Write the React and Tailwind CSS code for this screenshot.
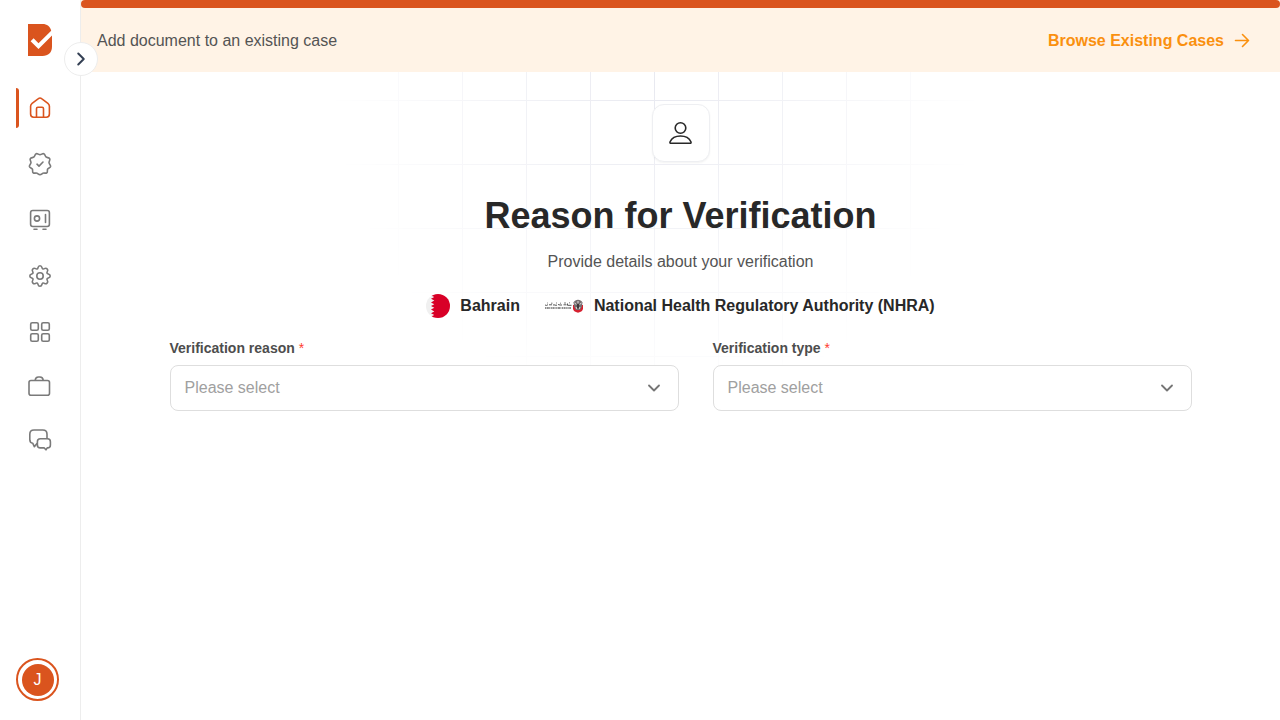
import React from "react";
import { ChevronDown, ChevronRight } from "lucide-react";

const stroke = {
  fill: "none",
  stroke: "currentColor",
  strokeWidth: 1.6,
  strokeLinecap: "round",
  strokeLinejoin: "round",
};

function Icon({ children }) {
  return (
    <svg className="size-6" viewBox="0 0 24 24" aria-hidden="true" {...stroke}>
      {children}
    </svg>
  );
}

const navItems = [
  {
    label: "Home",
    active: true,
    height: "h-10",
    icon: (
      <Icon>
        <path d="M2.600 10.300c0-1.300.5-2.200 1.500-3L10.400 2.600c1-.8 2.200-.8 3.200 0l6.300 4.700c1 .8 1.500 1.700 1.500 3v7.800c0 2-1.100 3.200-3.100 3.200H5.700c-2 0-3.100-1.200-3.100-3.200z" />
        <path d="M8.500 21v-8.300c0-.9.500-1.400 1.400-1.400h4.200c.9 0 1.400.5 1.400 1.400V21" />
      </Icon>
    ),
  },
  {
    label: "Verifications",
    height: "h-10",
    icon: (
      <Icon>
        <path d="M8.200 1.700c1.500-.3 2.300 1 3.800 1s2.300-1.300 3.800-1c1.400.5 1.200 2.300 2.200 3.200s2.900.6 3.700 1.800c.8 1.300-.7 2.400-.7 3.900s1.900 2.400 1.600 3.900c-.4 1.500-2.300 1.300-3 2.600-.6 1.200.4 2.700-.8 3.700-1.100.9-2.500-.1-3.800.4-1.100.4-1.500 1.400-3 1.400s-1.900-1-3-1.400c-1.300-.5-2.700.5-3.800-.4-1.200-1-.2-2.500-.8-3.700-.7-1.300-2.600-1.100-3-2.600-.3-1.500 1.600-2.400 1.600-3.900s-1.500-2.600-.7-3.900c.8-1.200 2.700-.9 3.700-1.800s.8-2.700 2.200-3.200z" />
        <path d="m9 12.200 2 1.900 4-4.100" />
      </Icon>
    ),
  },
  {
    label: "Vault",
    height: "h-10",
    icon: (
      <Icon>
        <rect x="2.600" y="2.500" width="18.800" height="16" rx="2.200" />
        <circle cx="9" cy="10.500" r="2.600" />
        <path d="M17.500 6.500v8M6 21.200h3M15 21.200h3" />
      </Icon>
    ),
  },
  {
    label: "Settings",
    height: "h-10",
    icon: (
      <Icon>
        <circle cx="12" cy="12" r="3.200" />
        <path d="M10 3.700C10.300 2.300 10.800 1.800 12 1.800s1.700.5 2 1.900c.3 1.300 1.300 1.700 2.400 1 1.200-.8 1.900-.7 2.700.2.900.8 1 1.500.2 2.700-.7 1.100-.3 2.100 1 2.400 1.400.3 1.900.8 1.900 2s-.5 1.700-1.900 2c-1.300.3-1.700 1.300-1 2.400.8 1.200.7 1.900-.2 2.700-.8.900-1.500 1-2.700.2-1.100-.7-2.100-.3-2.400 1-.3 1.400-.8 1.900-2 1.900s-1.700-.5-2-1.900c-.3-1.300-1.300-1.700-2.400-1-1.200.8-1.900.7-2.700-.2-.9-.8-1-1.500-.2-2.700.7-1.100.3-2.100-1-2.400C2.300 13.700 1.800 13.200 1.800 12s.5-1.700 1.900-2c1.300-.3 1.700-1.300 1-2.400-.8-1.200-.7-1.900.2-2.700.8-.9 1.500-1 2.700-.2 1.100.7 2.100.3 2.400-1z" />
      </Icon>
    ),
  },
  {
    label: "Apps",
    height: "h-10",
    icon: (
      <Icon>
        <rect x="2.700" y="2.700" width="7.600" height="7.600" rx="1.500" />
        <rect x="13.700" y="2.700" width="7.600" height="7.600" rx="1.500" />
        <rect x="2.700" y="13.700" width="7.600" height="7.600" rx="1.500" />
        <rect x="13.700" y="13.700" width="7.600" height="7.600" rx="1.500" />
      </Icon>
    ),
  },
  {
    label: "Jobs",
    height: "h-9",
    icon: (
      <Icon>
        <rect x="1" y="6.500" width="20.500" height="14.700" rx="2" />
        <path d="M7.200 6.300c.2-2.200 1.500-3.300 3.200-3.300h1.600c1.700 0 3 1.100 3.200 3.300" />
      </Icon>
    ),
  },
  {
    label: "Messages",
    height: "h-10",
    icon: (
      <Icon>
        <path d="M9 15.600 6.300 18.600l-1.500-3.300c-1.900-.3-3-1.700-3-3.800V6.200c0-2.600 1.500-4.200 4.200-4.200h8.800c2.700 0 4.200 1.600 4.200 4.200v4" />
        <path d="M12.300 10.800h7.200c1.900 0 2.900 1 2.900 2.900v3.200c0 1.900-1 3-2.900 3h-.3l-1.200 1.900-1.900-1.900h-3.800c-1.900 0-2.900-1.100-2.900-3v-3.200c0-1.900 1-2.900 2.900-2.900z" />
      </Icon>
    ),
  },
];

function Logo() {
  return (
    <svg className="h-8 w-6" viewBox="0 0 24 32" role="img" aria-label="Logo">
      <path
        fill="#da541e"
        d="M0 0h14.500c4.500 0 7.800 2.700 8.700 6.800L10.500 19.300l-4.900-5L2.600 17.300l7.900 7.700L24 11.500v11C24 28.500 20.300 32 14.500 32H0z"
      />
    </svg>
  );
}

function Sidebar() {
  return (
    <aside className="relative flex w-[81px] shrink-0 flex-col border-r border-[#ededed] bg-white">
      <a href="#home" className="flex pt-6 pl-7">
        <Logo />
      </a>
      <nav className="flex flex-1 flex-col gap-4 pt-8" aria-label="Main">
        {navItems.map((item) => (
          <a
            key={item.label}
            href={`#${item.label.toLowerCase()}`}
            aria-label={item.label}
            className={`flex items-center pl-4 ${item.height} ${item.active ? "text-[#da541e]" : "text-[#7a7a7a]"}`}
          >
            <span className={`mr-[9px] h-10 w-[3px] rounded-r-sm ${item.active ? "bg-[#da541e]" : ""}`} />
            {item.icon}
          </a>
        ))}
      </nav>
      <button
        type="button"
        aria-label="Account"
        className="mb-[19px] ml-4 flex size-[43px] items-center justify-center rounded-full border-2 border-[#da541e]"
      >
        <span className="flex size-8 items-center justify-center rounded-full bg-[#da541e] text-base text-white">J</span>
      </button>
      <button
        type="button"
        aria-label="Expand sidebar"
        className="absolute top-[42px] -right-[18px] z-10 flex size-[34px] items-center justify-center rounded-full border border-[#ededed] bg-white text-[#344054]"
      >
        <ChevronRight size={22} strokeWidth={2.2} />
      </button>
    </aside>
  );
}

function GridBackdrop() {
  return (
    <svg
      className="pointer-events-none absolute top-0 left-1/2 -translate-x-1/2"
      width="768"
      height="384"
      viewBox="0 0 768 384"
      fill="none"
      aria-hidden="true"
    >
      <defs>
        <radialGradient id="fade" gradientUnits="userSpaceOnUse" cx="358" cy="14" r="326">
          <stop stopColor="#fff" />
          <stop offset="1" stopColor="#fff" stopOpacity="0" />
        </radialGradient>
        <mask id="gridMask" maskUnits="userSpaceOnUse" x="0" y="0" width="768" height="384">
          <rect width="768" height="384" fill="url(#fade)" />
        </mask>
      </defs>
      <g mask="url(#gridMask)" stroke="#e8e9f0">
        {[37.5, 101.5, 165.5, 229.5, 293.5, 357.5, 421.5, 485.5, 549.5, 613.5, 677.5].map((x) => (
          <path key={x} d={`M${x} 0V384`} />
        ))}
        {[28.5, 92.5, 156.5, 220.5, 284.5].map((y) => (
          <path key={y} d={`M0 ${y}H768`} />
        ))}
      </g>
    </svg>
  );
}

function BahrainFlag() {
  return (
    <svg className="size-6" viewBox="0 0 24 24" role="img" aria-label="Flag of Bahrain">
      <clipPath id="flagClip">
        <circle cx="12" cy="12" r="12" />
      </clipPath>
      <g clipPath="url(#flagClip)">
        <path fill="#f0f0f0" d="M0 0h24v24H0z" />
        <path
          fill="#d80027"
          d="M24 0H5v1.500L8.300 3.100 5 4.700 8.300 6.600 5 8.400 8.300 10.200 5 12 8.300 13.800 5 15.600 8.300 17.400 5 19.300 8.300 20.900 5 22.500V24H24z"
        />
      </g>
    </svg>
  );
}

function AuthorityLogo() {
  return (
    <svg className="h-6 w-10" viewBox="0 0 40 24" role="img" aria-label="Authority logo">
      <g stroke="#444" fill="none">
        <path
          strokeWidth=".9"
          d="M1 11q1.500 1 3-.3M5 10.800h3M9 11.200q1-1 2 0h2M14 10.500l2 .5h2M19.500 10.800h3M23.500 9.500v1.800h4"
        />
        <path strokeWidth=".7" d="M3 9h.8M7 9.200h1.500M12 9h1M16 9.200h1M20 9h2M25 8.800h1" />
        <path strokeWidth="1.500" strokeDasharray="1.300 .5 2 .4 .8 .6" opacity=".8" d="M1 13.900h26" />
      </g>
      <path fill="#d6202f" d="M29 11h10v3.500c0 2-2 3.600-5 4.300-3-.7-5-2.300-5-4.300z" />
      <path fill="#777072" d="M29.500 8.500c1-2 2.600-2.800 4.500-2.800s3.500.8 4.500 2.800l-.6 4-1.700 3.500h-4.400L30.100 12.500z" />
      <path stroke="#f2eeee" strokeWidth=".9" fill="none" d="m30.500 9 2 1.500M37.500 9l-2 1.500M32 13l1 2M36 13l-1 2M34 7v2.500" />
      <path fill="#3c3738" d="m32.700 10.500 1.300-1 1.300 1-.4 4h-1.800z" />
    </svg>
  );
}

function SelectField({ id, label }) {
  return (
    <div className="flex flex-col gap-[7px]">
      <label htmlFor={id} className="text-sm leading-5 font-bold text-[#4d4d4d]">
        {label} <span className="font-normal text-[#ff3b30]">*</span>
      </label>
      <div className="relative">
        <select
          id={id}
          defaultValue=""
          className="h-[46px] w-full appearance-none rounded-lg border border-[#dedede] bg-white pr-10 pl-[14px] text-base text-[#a0a0a0]"
        >
          <option value="">Please select</option>
        </select>
        <ChevronDown
          size={20}
          strokeWidth={2.2}
          className="pointer-events-none absolute top-[13px] right-[15px] text-[#757575]"
        />
      </div>
    </div>
  );
}

export default function App() {
  return (
    <div className="flex min-h-screen bg-white font-['Liberation_Sans',Arial,sans-serif]">
      <Sidebar />
      <div className="flex min-w-0 flex-1 flex-col">
        <div className="bg-[#fff3e6]">
          <div className="h-2 rounded-full bg-[#da541e]" />
          <div className="flex h-16 items-center justify-between pt-[2px] pr-[29px] pl-4 text-base">
            <p className="text-[#545454]">Add document to an existing case</p>
            <a href="#cases" className="flex items-center gap-[9px] font-bold text-[#fa900f]">
              Browse Existing Cases
              <svg className="size-[18px]" viewBox="0 0 18 18" aria-hidden="true" {...stroke}>
                <path d="M2.500 8.500h13M9.500 2.500l6 6-6 6" />
              </svg>
            </a>
          </div>
        </div>
        <main className="relative flex flex-1 flex-col items-center overflow-hidden px-8 pt-8">
          <GridBackdrop />
          <div className="relative flex size-[58px] items-center justify-center rounded-xl border border-[#eeeff2] bg-white text-[#282828] shadow-xs">
            <svg className="size-7" viewBox="0 0 28 28" aria-hidden="true" {...stroke}>
              <circle cx="13.500" cy="9" r="5.300" />
              <path d="M4 24.300c-1 0-1.300-.7-.9-1.600 1.600-3.600 5.400-5.700 10.400-5.700s8.800 2.100 10.400 5.700c.4.900.1 1.600-.9 1.600z" />
            </svg>
          </div>
          <h1 className="relative mt-8 text-4xl leading-[44px] font-bold text-[#282828]">Reason for Verification</h1>
          <p className="relative mt-3 text-base text-[#545454]">Provide details about your verification</p>
          <div className="relative mt-5 flex items-center gap-6 text-base font-bold text-[#282828]">
            <div className="flex items-center gap-[10px]">
              <BahrainFlag />
              <span>Bahrain</span>
            </div>
            <div className="flex items-center gap-[10px]">
              <AuthorityLogo />
              <span>National Health Regulatory Authority (NHRA)</span>
            </div>
          </div>
          <form className="relative mt-5 grid w-full max-w-[1022px] grid-cols-[509fr_479fr] gap-[34px]">
            <SelectField id="verification-reason" label="Verification reason" />
            <SelectField id="verification-type" label="Verification type" />
          </form>
        </main>
      </div>
    </div>
  );
}
